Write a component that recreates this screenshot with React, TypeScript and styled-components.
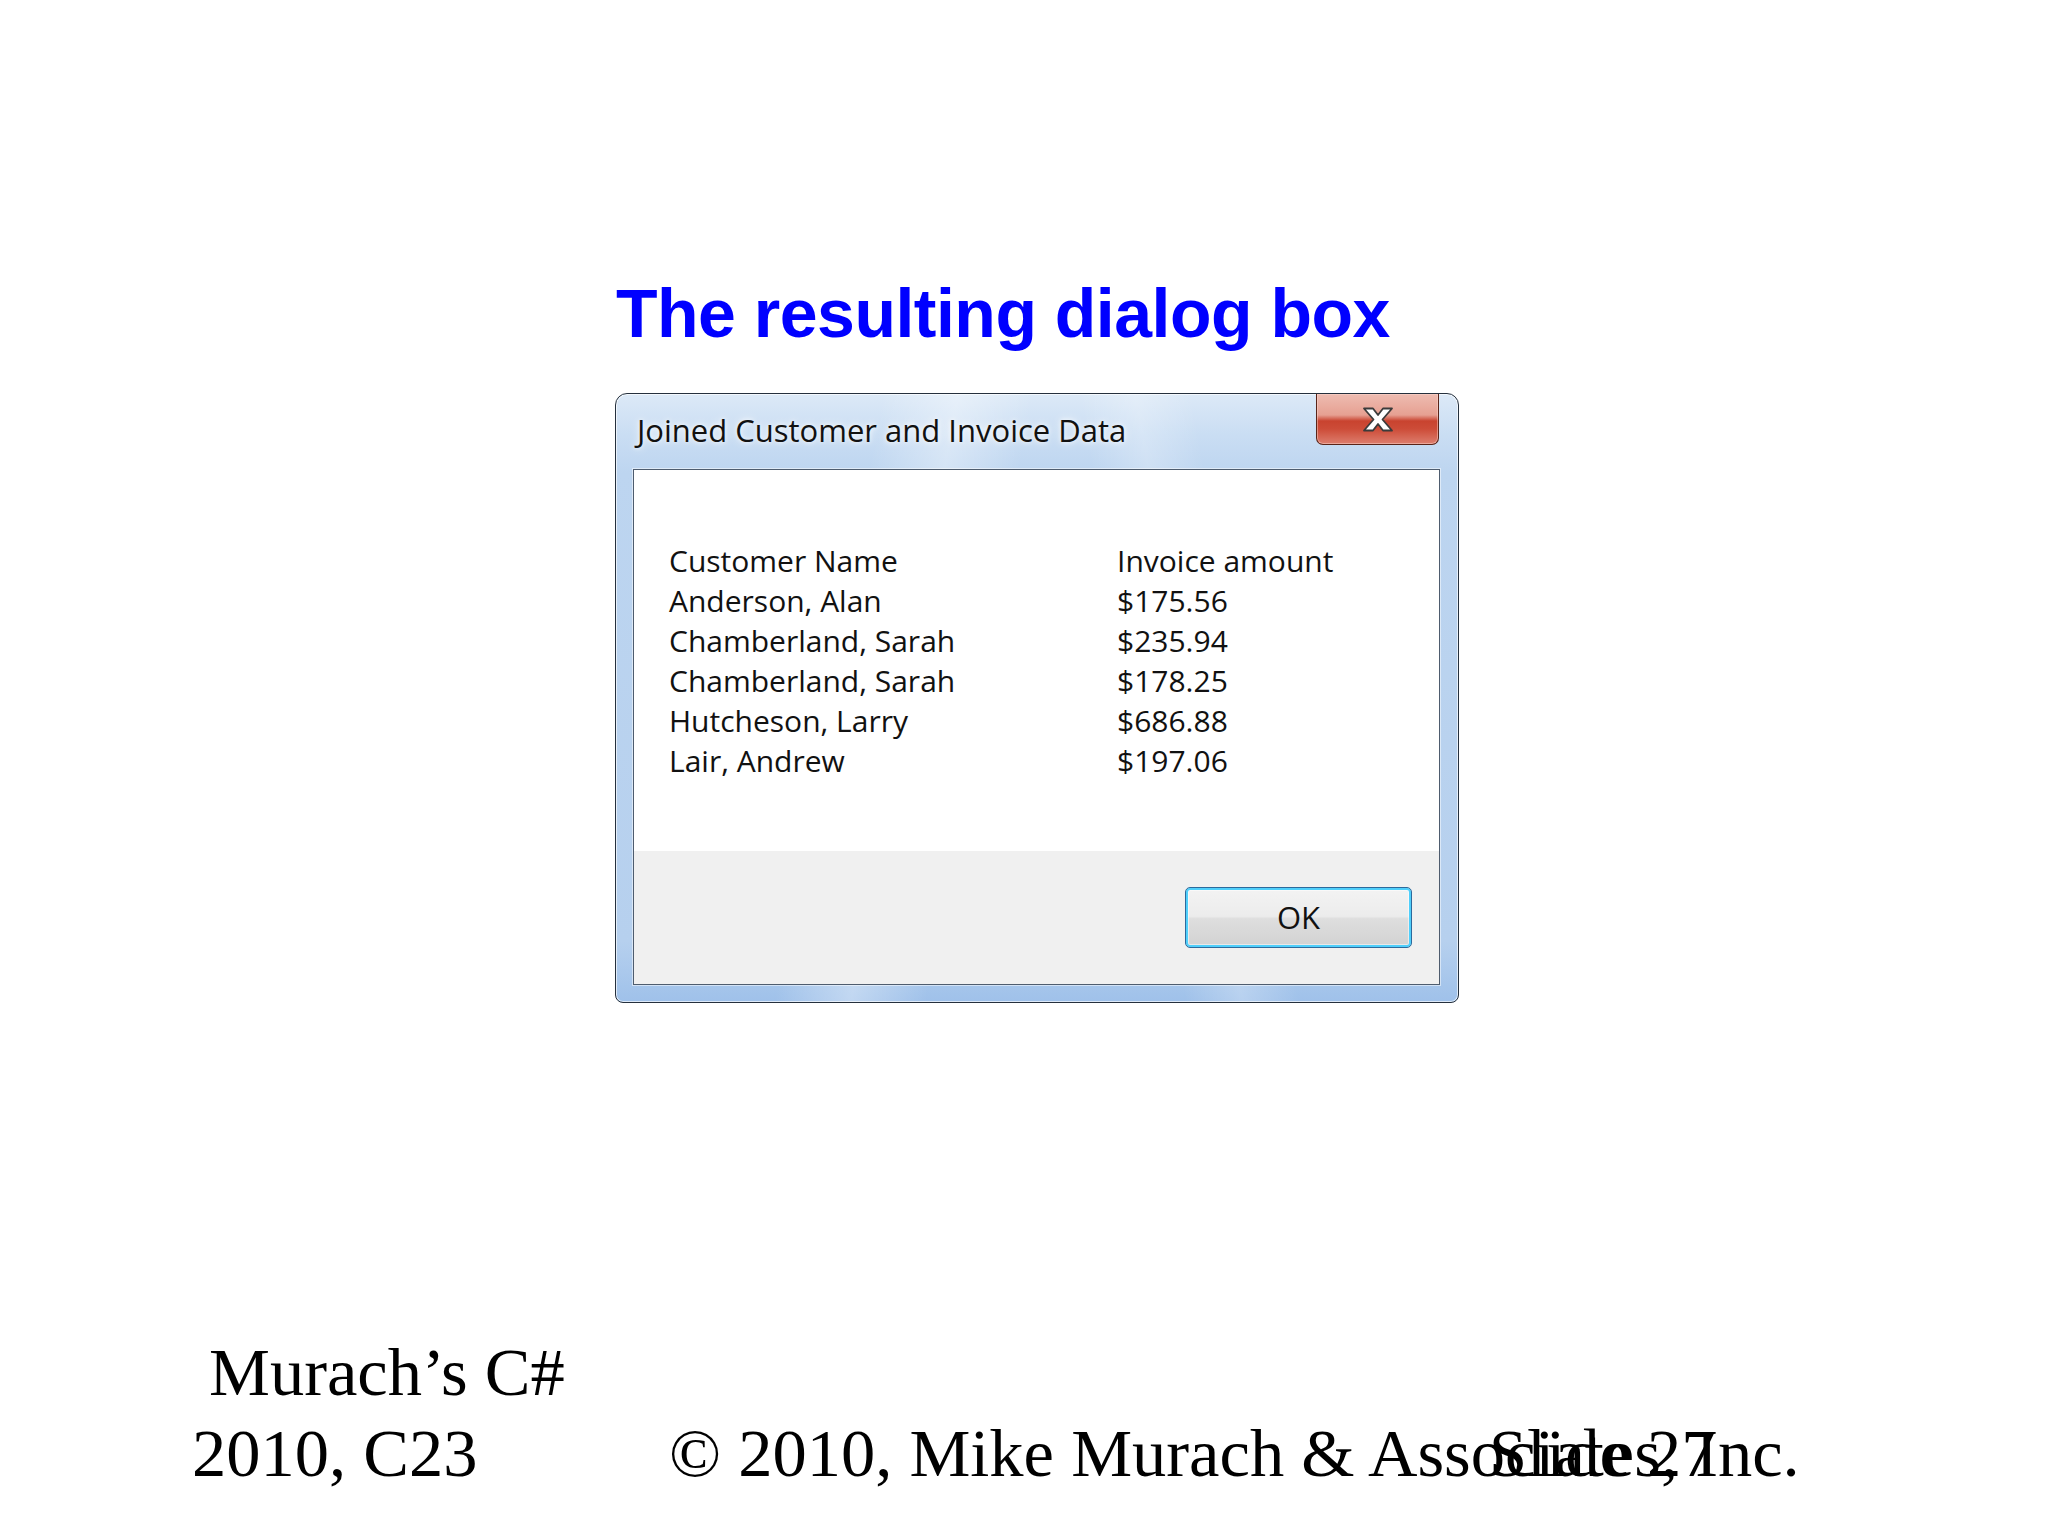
import styled, { createGlobalStyle } from "styled-components";

const GlobalStyle = createGlobalStyle`
  html, body {
    margin: 0;
    padding: 0;
    background: #ffffff;
  }
`;

const Page = styled.div`
  width: 2048px;
  height: 1536px;
  display: flex;
  flex-direction: column;
  background: #ffffff;
  overflow: hidden;
`;

const Main = styled.div`
  display: flex;
  flex-direction: column;
  align-items: flex-start;
  margin-left: 615px;
  padding-top: 279px;
`;

const SlideTitle = styled.h1`
  margin: 0;
  font-family: "Liberation Sans", Arial, sans-serif;
  font-weight: bold;
  font-size: 68px;
  line-height: 68px;
  letter-spacing: -0.5px;
  color: #0000ff;
  padding-left: 1px;
`;

const Window = styled.div`
  margin-top: 46px;
  width: 807px;
  display: flex;
  flex-direction: column;
  padding: 0 18px 17px 17px;
  border: 1px solid #25303d;
  border-radius: 12px 12px 8px 8px;
  box-shadow: inset 0 0 0 1px rgba(255, 255, 255, 0.65);
  background:
    linear-gradient(100deg, rgba(255, 255, 255, 0) 28%, rgba(255, 255, 255, 0.35) 36%, rgba(255, 255, 255, 0) 44%),
    linear-gradient(80deg, rgba(255, 255, 255, 0) 60%, rgba(255, 255, 255, 0.25) 66%, rgba(255, 255, 255, 0) 72%),
    linear-gradient(180deg, #dce9f7 0%, #c9ddf3 7%, #bdd5f0 13%, #b6d0ee 90%, #9fc1ea 100%);
`;

const TitleBar = styled.div`
  height: 75px;
  display: flex;
  align-items: flex-start;
  justify-content: space-between;
`;

const WindowCaption = styled.div`
  font-family: "Open Sans", "Noto Sans", sans-serif;
  font-size: 31px;
  line-height: 31px;
  color: #111111;
  padding-top: 21px;
  padding-left: 4px;
  text-shadow: 0 0 10px rgba(255, 255, 255, 0.9), 0 0 4px rgba(255, 255, 255, 0.8);
`;

const CloseButton = styled.div`
  width: 121px;
  height: 50px;
  margin-right: 1px;
  display: flex;
  align-items: center;
  justify-content: center;
  border: 1px solid #5a2418;
  border-top: none;
  border-radius: 0 0 7px 7px;
  box-shadow: inset 0 0 0 1px rgba(255, 220, 210, 0.45);
  background: linear-gradient(
    180deg,
    #eebcb1 0%,
    #e6a092 42%,
    #c9432f 54%,
    #cd4c38 70%,
    #dd7e6e 100%
  );
`;

const ContentArea = styled.div`
  display: flex;
  flex-direction: column;
  border: 1px solid #4e5c6e;
  box-shadow: 0 0 0 1px rgba(255, 255, 255, 0.5);
`;

const DataPanel = styled.div`
  height: 381px;
  box-sizing: border-box;
  padding: 71px 35px 0 35px;
  background: #ffffff;
  display: grid;
  grid-template-columns: 448px auto;
  align-content: start;
`;

const Cell = styled.div`
  font-family: "Open Sans", "Noto Sans", sans-serif;
  font-size: 30px;
  line-height: 40px;
  color: #111111;
  white-space: nowrap;
`;

const ButtonPanel = styled.div`
  height: 133px;
  box-sizing: border-box;
  background: #f0f0f0;
  display: flex;
  justify-content: flex-end;
  align-items: flex-start;
  padding: 36px 27px 0 0;
`;

const OkButton = styled.button`
  width: 227px;
  height: 61px;
  padding: 0;
  border: 1px solid #2d6a9c;
  border-radius: 5px;
  box-shadow: inset 0 0 0 2px #4fcffb, inset 0 0 0 3px rgba(255, 255, 255, 0.5);
  background: linear-gradient(180deg, #f3f3f3 0%, #ececec 48%, #dedede 52%, #d2d2d2 100%);
  font-family: "Open Sans", "Noto Sans", sans-serif;
  font-size: 31px;
  line-height: 59px;
  color: #111111;
`;

const Footer = styled.div`
  position: relative;
  margin-top: 329px;
  padding-left: 192px;
  display: flex;
  align-items: flex-end;
  font-family: "Liberation Serif", "Times New Roman", serif;
  font-size: 68.5px;
  line-height: 81px;
  color: #000000;
`;

const CourseBlock = styled.div`
  width: 477px;
`;

const CourseLine = styled.div<{ $indent?: number }>`
  text-indent: ${(p) => p.$indent ?? 0}px;
  white-space: nowrap;
`;

const Copyright = styled.div`
  white-space: nowrap;
`;

const SlideNumber = styled.div`
  position: absolute;
  left: 1489px;
  bottom: 0;
  white-space: nowrap;
`;

const rows: [string, string][] = [
  ["Customer Name", "Invoice amount"],
  ["Anderson, Alan", "$175.56"],
  ["Chamberland, Sarah", "$235.94"],
  ["Chamberland, Sarah", "$178.25"],
  ["Hutcheson, Larry", "$686.88"],
  ["Lair, Andrew", "$197.06"],
];

function CloseGlyph() {
  return (
    <svg width="32" height="25" viewBox="0 0 32 25">
      <polygon
        points="2,1.5 11,1.5 16,8 21,1.5 30,1.5 20.5,12.5 30,23.5 21,23.5 16,17 11,23.5 2,23.5 11.5,12.5"
        fill="#ffffff"
        stroke="#3b3b3b"
        strokeWidth="1.8"
        strokeLinejoin="round"
      />
    </svg>
  );
}

export default function App() {
  return (
    <Page>
      <GlobalStyle />
      <Main>
        <SlideTitle>The resulting dialog box</SlideTitle>
        <Window>
          <TitleBar>
            <WindowCaption>Joined Customer and Invoice Data</WindowCaption>
            <CloseButton>
              <CloseGlyph />
            </CloseButton>
          </TitleBar>
          <ContentArea>
            <DataPanel>
              {rows.map(([name, amount], i) => (
                <>
                  <Cell key={"n" + i}>{name}</Cell>
                  <Cell key={"a" + i}>{amount}</Cell>
                </>
              ))}
            </DataPanel>
            <ButtonPanel>
              <OkButton>OK</OkButton>
            </ButtonPanel>
          </ContentArea>
        </Window>
      </Main>
      <Footer>
        <CourseBlock>
          <CourseLine $indent={17}>Murach’s C#</CourseLine>
          <CourseLine>2010, C23</CourseLine>
        </CourseBlock>
        <Copyright>© 2010, Mike Murach &amp; Associates, Inc.</Copyright>
        <SlideNumber>Slide 27</SlideNumber>
      </Footer>
    </Page>
  );
}
